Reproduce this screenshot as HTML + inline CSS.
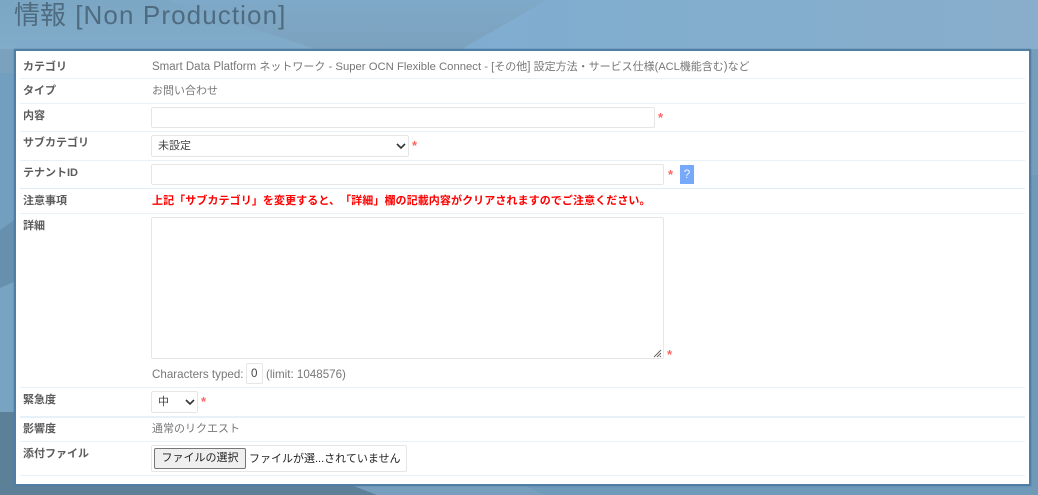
<!DOCTYPE html>
<html lang="ja"><head><meta charset="utf-8"><title>情報</title>
<style>
*{box-sizing:border-box;text-spacing-trim:space-all}
html,body{margin:0;padding:0;width:1038px;height:495px;overflow:hidden;background:#7ba5c2}
body{position:relative;font-family:"Liberation Sans","Noto Sans CJK JP",sans-serif;font-size:11px;color:#666}
.a{position:absolute;white-space:nowrap}
#bg{position:absolute;left:0;top:0}
#title{left:14px;top:-3px;font-size:26px;line-height:36px;color:#4f6b80}
#title span{letter-spacing:1.1px;margin-left:2px}
#panel{left:14px;top:49px;width:1017px;height:437px;background:#fff;border:2px solid #4f7fa6;box-shadow:0 0 1px #446f92}
.l{height:1px;left:20px;width:1005px;background:#e6f1fa}
.k{left:23px;font-weight:bold;font-size:11px;line-height:16px;color:#5c5c5c}
.v{left:152px;line-height:16px;color:#777;font-size:11px}
.e{font-size:11.5px}
.i{border:1px solid #e6e6e6;border-radius:2px;background:#fff;left:151px}
.s{color:#ff6464;font-size:13px;line-height:14px;font-weight:bold}
.sel{left:151px;border:1px solid #e6e6e6;border-radius:2px;background:#fff;color:#444;font-size:11px;padding-left:6px}
.chev{position:absolute}
</style></head><body>
<svg id="bg" width="1038" height="495" viewBox="0 0 1038 495">
<defs>
<linearGradient id="w" x1="0" y1="0" x2="0" y2="1"><stop offset="0" stop-color="#7ea9c8"/><stop offset="1" stop-color="#7ca2be"/></linearGradient>
<linearGradient id="lft" x1="0" y1="0" x2="0" y2="1"><stop offset="0" stop-color="#7ba6c4"/><stop offset="1" stop-color="#80abc9"/></linearGradient>
<linearGradient id="rgt" x1="0" y1="0" x2="1" y2="0"><stop offset="0" stop-color="#7fadd0"/><stop offset="1" stop-color="#88aecb"/></linearGradient>
</defs>
<rect width="1038" height="495" fill="#7ba5c2"/>
<polygon points="0,0 167,0 316,49 0,49" fill="url(#lft)"/>
<polygon points="167,0 547,0 462,49 316,49" fill="url(#w)"/>
<polygon points="547,0 1038,0 1038,49 462,49" fill="url(#rgt)"/>
<polygon points="0,49 14,49 14,73 0,73" fill="#7aa1bd"/>
<polygon points="0,73 14,73 14,220 0,230" fill="#729fc0"/>
<polygon points="0,230 14,220 14,282 0,288" fill="#6690ae"/>
<polygon points="0,288 14,282 14,412 0,412" fill="#78a3c1"/>
<polygon points="0,412 14,412 14,495 0,495" fill="#5d8099"/>
<polygon points="0,486 354,486 377,495 0,495" fill="#5d8099"/>
<polygon points="354,486 526,486 545,495 377,495" fill="#779fbd"/>
<polygon points="526,486 1038,486 1038,495 545,495" fill="#6f9aba"/>
<polygon points="1031,49 1038,49 1038,175 1031,175" fill="#769dba"/>
<polygon points="1031,175 1038,175 1038,495 1031,495" fill="#7099b6"/>
</svg>
<div id="title" class="a">情報 <span>[Non Production]</span></div>
<div id="panel" class="a"></div>

<div class="a l" style="top:78px"></div>
<div class="a l" style="top:103px"></div>
<div class="a l" style="top:131px"></div>
<div class="a l" style="top:160px"></div>
<div class="a l" style="top:188px;background:#dcecf9"></div>
<div class="a l" style="top:213px"></div>
<div class="a l" style="top:387px"></div>
<div class="a l" style="top:416px;height:2px"></div>
<div class="a l" style="top:441px"></div>
<div class="a l" style="top:475px"></div>

<div class="a k" style="top:59px">カテゴリ</div>
<div class="a v" style="top:59px"><span class="e">Smart Data Platform </span>ネットワーク<span class="e" style="font-size:11.3px"> - Super OCN Flexible Connect - [</span>その他<span class="e">] </span>設定方法・サービス仕様<span class="e" style="font-size:11px">(ACL</span>機能含む<span class="e">)</span>など</div>
<div class="a k" style="top:83px">タイプ</div>
<div class="a v" style="top:83px">お問い合わせ</div>
<div class="a k" style="top:108px">内容</div>
<div class="a i" style="top:107px;width:504px;height:21px"></div>
<div class="a s" style="left:658px;top:111px">*</div>
<div class="a k" style="top:135px">サブカテゴリ</div>
<div class="a sel" style="top:135px;width:258px;height:22px;line-height:21px">未設定</div>
<svg class="chev" style="left:396px;top:143px" width="10" height="7" viewBox="0 0 10 7"><path d="M1 1L5 5L9 1" fill="none" stroke="#333" stroke-width="1.6"/></svg>
<div class="a s" style="left:412px;top:139px">*</div>
<div class="a k" style="top:165px">テナントID</div>
<div class="a i" style="top:164px;width:513px;height:21px"></div>
<div class="a s" style="left:668px;top:168px">*</div>
<div class="a" style="left:680px;top:165px;width:14px;height:19px;background:#76a9fa;color:#eef4ff;font-size:12px;line-height:19px;text-align:center">?</div>
<div class="a k" style="top:193px">注意事項</div>
<div class="a" style="left:152px;top:193px;line-height:16px;font-weight:bold;color:#f00;font-size:11px;letter-spacing:.09px">上記「サブカテゴリ」を変更すると、「詳細」欄の記載内容がクリアされますのでご注意ください。</div>
<div class="a k" style="top:218px">詳細</div>
<div class="a i" style="top:217px;width:513px;height:142px"></div>
<svg class="chev" style="left:653px;top:349px" width="9" height="9" viewBox="0 0 9 9"><path d="M1 8L8 1M4 8L8 4M7 8L8 7" fill="none" stroke="#666" stroke-width="1"/></svg>
<div class="a s" style="left:667px;top:348px">*</div>
<div class="a v e" style="top:367px;font-size:11.6px">Characters typed:</div>
<div class="a i" style="left:246px;top:363px;width:17px;height:21px;color:#444;font-size:11.6px;line-height:19px;padding-left:4px">0</div>
<div class="a v e" style="left:266px;top:367px;font-size:11.6px">(limit: 1048576)</div>
<div class="a k" style="top:392px">緊急度</div>
<div class="a sel" style="top:391px;width:47px;height:22px;line-height:21px">中</div>
<svg class="chev" style="left:185px;top:399px" width="10" height="7" viewBox="0 0 10 7"><path d="M1 1L5 5L9 1" fill="none" stroke="#333" stroke-width="1.6"/></svg>
<div class="a s" style="left:201px;top:395px">*</div>
<div class="a k" style="top:421px">影響度</div>
<div class="a v" style="top:421px">通常のリクエスト</div>
<div class="a k" style="top:446px">添付ファイル</div>
<div class="a i" style="top:445px;width:256px;height:27px"></div>
<div class="a" style="left:154px;top:448px;width:92px;height:21px;background:#efefef;border:1px solid #767676;border-radius:2px;color:#222;font-size:11px;line-height:19px;text-align:center">ファイルの選択</div>
<div class="a" style="left:249px;top:451px;color:#222;font-size:11px;line-height:16px">ファイルが選...されていません</div>
</body></html>
